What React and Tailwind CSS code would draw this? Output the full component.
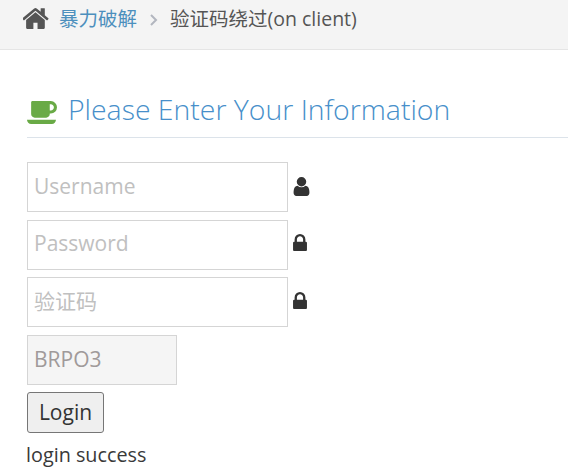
const font = { fontFamily: '"Open Sans", "Noto Sans CJK SC", sans-serif' }

function HomeIcon({ className }) {
  return (
    <svg className={className} viewBox="64 192 1664 1344" fill="currentColor">
      <path d="M1408 992v480q0 26-19 45t-45 19h-384v-384h-256v384h-384q-26 0-45-19t-19-45v-480q0-1 .5-3t.5-3l575-474 575 474q1 2 1 6zm223-69l-62 74q-8 9-21 11h-3q-13 0-21-7l-692-577-692 577q-12 8-24 7-13-2-21-11l-62-74q-8-10-7-23.5t11-21.5l719-599q32-26 76-26t76 26l244 204v-195q0-14 9-23t23-9h192q14 0 23 9t9 23v408l219 182q10 8 11 21.5t-7 23.5z" />
    </svg>
  )
}

function CoffeeIcon({ className }) {
  return (
    <svg className={className} viewBox="-64 256 1856 1408" fill="currentColor">
      <path d="M1600 640q0-80-56-136t-136-56h-64v384h64q80 0 136-56t56-136zm-1664 768h1792q0 106-75 181t-181 75h-1280q-106 0-181-75t-75-181zm1856-768q0 159-112.5 271.5t-271.5 112.5h-64v32q0 92-66 158t-158 66h-704q-92 0-158-66t-66-158v-736q0-26 19-45t45-19h1152q159 0 271.5 112.5t112.5 271.5z" />
    </svg>
  )
}

function UserIcon({ className }) {
  return (
    <svg className={className} viewBox="256 128 1280 1536" fill="currentColor">
      <path d="M1536 1399q0 109-62.5 187t-150.5 78h-854q-88 0-150.5-78t-62.5-187q0-85 8.5-160.5t31.5-152 58.5-131 94-89 134.5-34.5q131 128 313 128t313-128q76 0 134.5 34.5t94 89 58.5 131 31.5 152 8.5 160.5zm-256-887q0 159-112.5 271.5t-271.5 112.5-271.5-112.5-112.5-271.5 112.5-271.5 271.5-112.5 271.5 112.5 112.5 271.5z" />
    </svg>
  )
}

function LockIcon({ className }) {
  return (
    <svg className={className} viewBox="320 128 1152 1408" fill="currentColor">
      <path d="M640 768h512v-192q0-106-75-181t-181-75-181 75-75 181v192zm832 96v576q0 40-28 68t-68 28h-960q-40 0-68-28t-28-68v-576q0-40 28-68t68-28h32v-192q0-184 132-316t316-132 316 132 132 316v192h32q40 0 68 28t28 68z" />
    </svg>
  )
}

function Field({ placeholder, icon: Icon, iconClass, inputClass }) {
  return (
    <div className="flex items-center h-[50px]">
      <input
        readOnly
        placeholder={placeholder}
        className={`w-[261px] h-[50px] border border-[#d5d5d5] bg-white px-[6px] text-[21px] text-[#333] placeholder:text-[#c0c0c0] outline-none ${inputClass}`}
      />
      <Icon className={iconClass} />
    </div>
  )
}

export default function App() {
  return (
    <div className="w-[568px] h-[475px] overflow-hidden bg-white text-[#393939]" style={font}>
      <div className="h-[50px] bg-[#f4f4f4] border-b border-[#e5e5e5] flex items-center pl-[23px] pb-[10px] text-[19.5px]">
        <HomeIcon className="w-[27px] h-[22px] text-[#555] mb-[4px]" />
        <a className="ml-[9px] mb-[1px] text-[#4c8fbd]">暴力破解</a>
        <span className="ml-[13px] mr-[12px] text-[#b2b6bf]">
          <svg width="8" height="12" viewBox="0 0 8 12" fill="none" stroke="currentColor" strokeWidth="2" className="mt-[1px]">
            <path d="M1 1l5 5-5 5" />
          </svg>
        </span>
        <span className="mb-[1px] text-[#555]">验证码绕过(on client)</span>
      </div>

      <div className="pl-[27px]">
        <div className="mt-[37px] h-[51px] border-b border-[#dce3ea] flex items-center">
          <CoffeeIcon className="w-[30px] h-[23px] text-[#69aa46] mt-[1px]" />
          <h1 className="ml-[11px] mb-[5px] text-[28.4px] font-light text-[#478fca] leading-none">Please Enter Your Information</h1>
        </div>

        <div className="mt-[24px] flex flex-col gap-[7.5px]">
          <Field placeholder="Username" icon={UserIcon} inputClass="pb-[2px]" iconClass="ml-[5px] mb-[1px] w-[17px] h-[19px] text-[#333]" />
          <Field placeholder="Password" icon={LockIcon} inputClass="pb-[4px]" iconClass="ml-[5px] mb-[5px] w-[14px] h-[17px] text-[#333]" />
          <Field placeholder="验证码" icon={LockIcon} inputClass="pb-[2px]" iconClass="ml-[5px] mb-[3px] w-[14px] h-[17px] text-[#333]" />
          <div className="w-[150px] h-[50px] border border-[#d5d5d5] bg-[#f5f5f5] px-[6px] flex items-center text-[21px] text-[#a09a9a]">BRPO3</div>
        </div>

        <button className="mt-[7px] block w-[77px] h-[41px] border border-[#767676] rounded-[3px] bg-[#efefef] pt-[1px] text-[21px] text-[#333]">Login</button>
        <p className="mt-[8px] -ml-[1px] text-[19.8px] leading-[28px] text-[#393939]">login success</p>
      </div>
    </div>
  )
}
